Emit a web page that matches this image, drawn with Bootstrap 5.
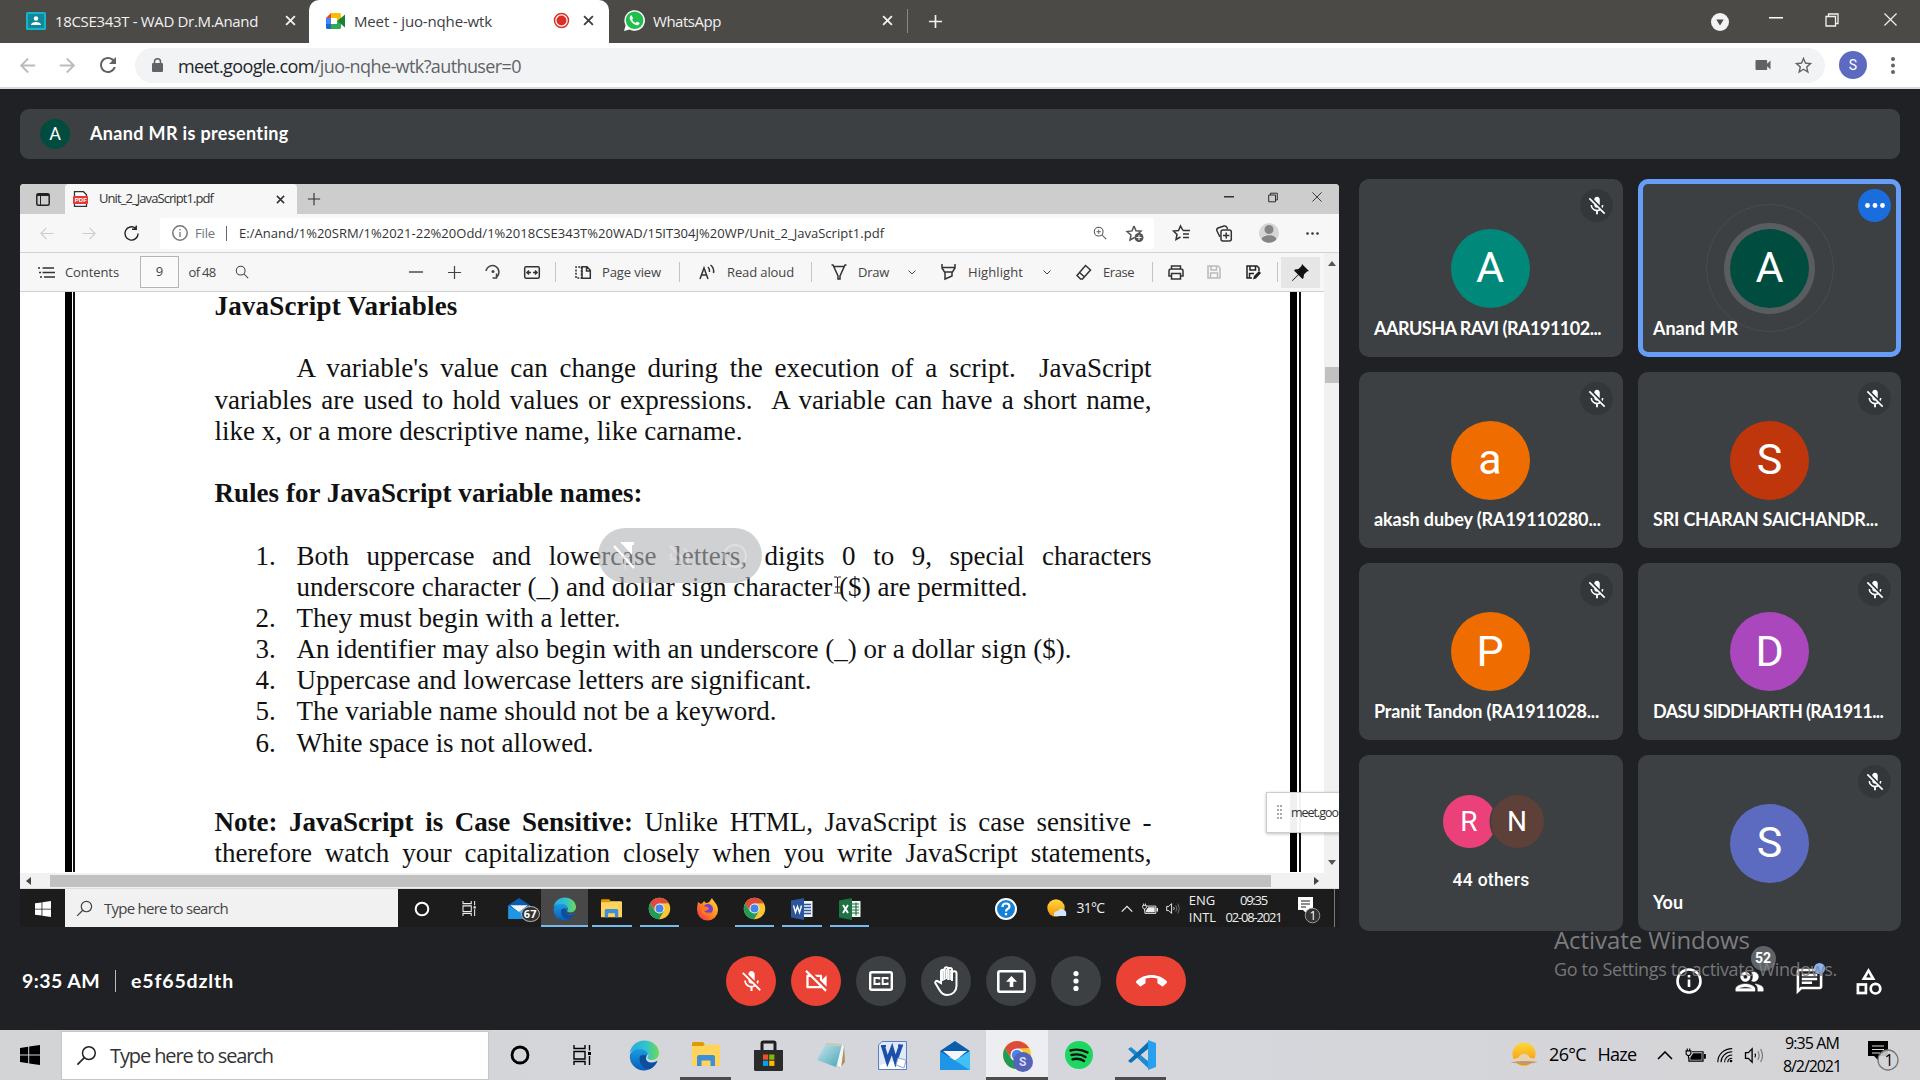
<!DOCTYPE html>
<html lang="en">
<head>
<meta charset="utf-8">
<title>Meet - juo-nqhe-wtk</title>
<link href="https://cdn.jsdelivr.net/npm/bootstrap@5.3.0/dist/css/bootstrap.min.css" rel="stylesheet">
<style>
body{width:1920px;height:1080px;overflow:hidden;background:#202124;font-family:"Open Sans","Noto Sans",sans-serif;font-size:15px;line-height:1.2}
svg{display:block;flex:none;overflow:visible}
.cell{display:flex;align-items:center;justify-content:center;flex:none;white-space:nowrap}
.slots{display:grid;align-items:center;justify-items:center;white-space:nowrap}
.slots>.tx{justify-self:start}
.ln{fill:none;stroke:currentColor;stroke-width:1.5}
.gs{font-family:Lato,"Noto Sans",sans-serif;font-weight:700}
.rb{font-family:Roboto,sans-serif}
.disc{border-radius:50%;display:flex;align-items:center;justify-content:center;color:#fff;flex:none}

/* browser chrome */
.tabstrip{height:43px;background:#4b4a47;color:#f1f1f1}
.tabstrip .slots{padding-bottom:2px}
.tab1{width:309px;grid-template-columns:25px 30px 218px 34px 2px}
.tab2{width:300px;height:43px;background:#fff;color:#3c4043;border-radius:10px 10px 0 0;grid-template-columns:16px 29px 191px 32px 23px 9px}
.tab3{width:299px;grid-template-columns:14px 30px 221px 26px 7px 1px}
.tsep{width:1px;height:24px;background:#8a8987}
.w54{width:54px}.w56{width:56px}.w40{width:40px}
.addrbar{height:46px;background:#fff;border-bottom:2px solid #d9dadc;color:#5f6368;padding-left:7px}
.w405{width:40.5px}
.omni{width:1690px;height:35px;border-radius:18px;background:#f1f3f4;margin-left:6.5px;margin-right:8px;font-size:18px;padding-right:2px}
.lockc{width:43px;padding-left:2px}

/* call page */
.stage{height:941px;padding:20px 0 0 20px}
.banner{width:1880px;height:50px;background:#3c4043;border-radius:9px;color:#fff;font-size:18px}
.d30{width:30px;height:30px}
.split{height:748px;margin-top:20px}
.shared{width:1319px;height:743px;margin-top:5px;background:#fff;border-radius:4px 4px 0 0;overflow:hidden;color:#333;font-size:13px;position:relative}
.etabs{height:30px;background:#cdcdcd}
.etab{width:232px;height:30px;background:#f7f7f7;border-radius:4px 4px 0 0;grid-template-columns:4px 26px 171px 28px 3px}
.w45{width:45px}.w44{width:44px}.w33{width:33px}
.eaddr{height:39px;background:#f7f7f7;border-bottom:1px solid #d2d2d2;grid-template-columns:5px 43px 41px 45px 6px 994px 6px 42px 44px 45px 43px 5px}
.ebox{width:994px;height:31px;background:#fff;border-radius:3px;display:grid;align-items:center;justify-items:center;grid-template-columns:4px 31px 27px 8px 9px 846px 30px 39px}
.ebox .tx{justify-self:start;padding-top:1px}
.etools{width:1304px;height:39px;background:#f7f7f7;border-bottom:1px solid #cfcfcf;color:#444;grid-template-columns:8px 37px 75px 39px 9.5px 33.5px 40px 134px 39px 39px 38px 39px 8px 4px 39px 73px 8px 4px 40px 80px 8px 5px 38px 39px 30px 1px 40px 64px 30px 3px 38px 45px 8px 39px 38px 40px 8px 39px 4px}
.etools .tx{padding-top:1px}
.vsep{width:1px;height:20px;background:#c4c4c4}
.pgbox{width:39px;height:32px;border:1px solid #b5b5b5;background:#fafafa}
.pinb{width:39px;height:31px;background:#e6e6e6;color:#111}
.vscroll{width:15px;height:620px;background:#f1f1f1;color:#555}
.vthumb{width:14px;height:16px;background:#c1c1c1;margin-top:101px}
.page{width:1304px;height:581px;overflow:hidden;color:#111}
.rule2{width:10px;border-left:7px solid #000;border-right:2px solid #111;height:580px}
.rule2.far{width:11px}
.rulegap1{width:45px}
.sheet{width:1215px;font-family:"Liberation Serif",serif;font-size:27px;line-height:31.2px;padding-left:139.5px}
.sheet>div{width:937px;height:31.2px;white-space:nowrap}
.sheet>.topline{height:30.2px;line-height:29.6px}
.full{text-align:justify;text-align-last:justify;white-space:normal!important}
.ind{padding-left:82px}
.sheet>.lst{display:grid;grid-template-columns:18px 0 64px 855px;width:937px}
.lst>span:first-child{grid-column:3;text-align:left;padding-left:23px}
.lst>.body1{grid-column:4}
.noteline{margin-top:48px}
.hscroll{height:16px;background:#f1f1f1;color:#555;border-bottom:1px solid #ddd;grid-template-columns:16px 14px 1221px 35px 20px 13px}
.hthumb{width:1221px;height:12px;background:#c1c1c1}
.itask{height:39px;background:#1c1c1c;color:#eee}
.isearch{width:333px;height:38px;background:#f1f1f1;color:#444;font-size:15px;grid-template-columns:39px 1fr}
.iapps{display:flex;height:39px}
.iapps>.cell{width:47.55px;height:39px;position:relative}
.iapps>.on::after{content:"";position:absolute;left:4px;right:4px;bottom:0;height:3px;background:#76b9ed}
.iapps>.act{background:#484848}
.iapps>.act::after{left:0;right:0}
.itray{grid-template-columns:46px 16px 24px 42px 28px 22px 24px 34px 68px 44px 3px 1px;height:39px;font-size:13px;margin-left:110px}
.tline{width:1px;height:39px;background:#777}
.hud{left:578px;top:344px;width:164px;height:55px;border-radius:28px;background:rgba(176,178,181,.6);display:grid;grid-template-columns:1fr 1fr 1fr;align-items:center;justify-items:center}
.toastbox{left:1246px;top:608px;width:80px;height:41px;background:rgba(255,255,255,.94);border:1px solid #ccc;box-shadow:0 1px 3px rgba(0,0,0,.25);font-size:12.5px;white-space:nowrap;padding:12px 0 0 24px}
.grip{left:10px;top:12px;width:5px;height:14px;border-left:2px dotted #aaa;border-right:2px dotted #aaa}
.ibeam{left:813px;top:392px}

/* participants */
.people{display:grid;grid-template-columns:264px 263px;grid-template-rows:178px 176px 177px 176px;column-gap:15px;row-gap:15px;margin-left:20px;align-content:start}
.tile{background:#3c4043;border-radius:10px;color:#fff;position:relative;display:flex;align-items:center;justify-content:center}
.tile.speaking{box-shadow:inset 0 0 0 5px #669df6}
.face{width:79px;height:79px;font-size:43px;position:relative}
.tile:nth-child(odd)>.face{left:-1px}
.face.ring{box-shadow:0 0 0 6px #5a5d60}
.halo{position:absolute;left:50%;top:50%;width:128px;height:128px;margin:-64px;border:1px solid #484c50;border-radius:50%}
.mic{position:absolute;right:10px;top:10px;width:33px;height:33px;background:#34373a}
.who{position:absolute;left:15px;bottom:20.5px;font-size:18px;line-height:18px;white-space:nowrap}
.f53{width:53px;height:53px;font-size:28px}
.f53+.f53{margin-left:-5px;box-shadow:0 0 0 1.5px #3c4043}

/* call bar */
.callbar{height:103px;padding-top:5px;color:#fff;width:1900px;display:grid;grid-template-columns:706px 470px 1fr;align-items:center}
.clock{font-size:19.5px;padding-left:2px}
.csep{width:1px;height:22px;background:#bbb;margin:0 15px}
.cbtn{width:50px;height:50px;border-radius:25px;background:#3c4043;color:#fff}
.red{background:#ea4335}
.cbtn.hang{width:70px}
.cright{grid-template-columns:60px 60px 60px 60px;justify-content:end;padding-right:21px}
.cnt{left:18px;top:-19px;width:25px;height:25px;background:#5f6368;font-size:14px;font-weight:700}
.dot{left:18px;top:-5px;width:11px;height:11px;background:#8ab4f8;border-radius:50%}
.mark1{left:1554px;top:922px;color:#848587;font-size:24px;line-height:36px;white-space:nowrap;opacity:.92}
.mark2{left:1554px;top:957px;color:#848587;font-size:18px;line-height:24px;white-space:nowrap;opacity:.85}

/* taskbar */
.wtask{height:50px;background:linear-gradient(90deg,#d3d4d6,#d6d7dd 55%,#d4d4d6);color:#000}
.wstart{width:61px;padding-right:1px}
.wsearch{width:428px;height:49px;background:#fff;border:1px solid #c6c6c6;color:#333;font-size:20px;grid-template-columns:48px 1fr;margin-top:1px}
.wapps>.cell{width:62.1px;height:50px;position:relative}
.wapps>.on::after{content:"";position:absolute;left:5px;right:6px;bottom:0;height:3px;background:#4c4c4e}
.wapps>.act{background:#edeef1}
.wapps>.act::after{left:0;right:0}
.wtray{grid-template-columns:44px 43px 56px 35px 30px 30px 28px 88px 56px;height:50px;margin-left:auto;padding-right:8px;font-size:18px}
.wtray .stack{font-size:16px;line-height:23px;text-align:center}
.itray .stack{line-height:16.5px;font-size:13px}
</style>
</head>
<body>
<svg width="0" height="0" class="position-absolute">
<defs>
<linearGradient id="gE1" x1="0" y1="0" x2="1" y2="0"><stop offset="0" stop-color="#29a9e0"/><stop offset=".55" stop-color="#2fc2cf"/><stop offset="1" stop-color="#6fdc50"/></linearGradient>
<linearGradient id="gE2" x1="0" y1="0" x2="0" y2="1"><stop offset="0" stop-color="#1b9de2"/><stop offset="1" stop-color="#0a5cb8"/></linearGradient>
<linearGradient id="gS" x1="0" y1="0" x2="0" y2="1"><stop offset="0" stop-color="#ffd93b"/><stop offset="1" stop-color="#f79009"/></linearGradient>
<linearGradient id="gF" x1="1" y1="0" x2="0" y2="1"><stop offset="0" stop-color="#ffe23a"/><stop offset=".5" stop-color="#ff8a1c"/><stop offset="1" stop-color="#f0235a"/></linearGradient>
<linearGradient id="gN" x1="0" y1="0" x2="1" y2="1"><stop offset="0" stop-color="#c8eaf0"/><stop offset="1" stop-color="#4aa3b5"/></linearGradient>
<symbol id="x" viewBox="0 0 10 10"><path d="M1 1l8 8M9 1l-8 8" fill="none" stroke="currentColor" stroke-width="1.7"/></symbol>
<symbol id="xt" viewBox="0 0 14 14"><path d="M.5.5l13 13M13.500.500l-13 13" fill="none" stroke="currentColor" stroke-width="1.300"/></symbol>
<symbol id="restore" viewBox="0 0 14 14"><path d="M1 3.500h9.500v9.500H1zM3.500 3.500V1H13v9.500h-2.500" fill="none" stroke="currentColor" stroke-width="1.300"/></symbol>
<symbol id="plus" viewBox="0 0 16 16"><path d="M8 1v14M1 8h14" fill="none" stroke="currentColor" stroke-width="1.800"/></symbol>
<symbol id="plust" viewBox="0 0 16 16"><path d="M8 1v14M1 8h14" fill="none" stroke="currentColor" stroke-width="1.300"/></symbol>
<symbol id="back" viewBox="0 0 24 24"><path d="M20 11H7.830l5.590-5.590L12 4l-8 8 8 8 1.410-1.410L7.830 13H20z" fill="currentColor"/></symbol>
<symbol id="backt" viewBox="0 0 16 16"><path d="M15 8H1.500M7.500 2l-6 6 6 6" fill="none" stroke="currentColor" stroke-width="1.200"/></symbol>
<symbol id="reload" viewBox="0 0 24 24"><path d="M17.650 6.350C16.200 4.900 14.210 4 12 4c-4.420 0-7.990 3.580-7.990 8s3.570 8 7.990 8c3.730 0 6.840-2.550 7.730-6h-2.080c-.82 2.330-3.040 4-5.650 4-3.310 0-6-2.690-6-6s2.690-6 6-6c1.660 0 3.140.69 4.220 1.780L13 11h7V4z" fill="currentColor"/></symbol>
<symbol id="reloadt" viewBox="0 0 18 18"><path d="M16 9a7 7 0 1 1-2.500-5.400M14 .5v4h-4.500" fill="none" stroke="currentColor" stroke-width="1.500"/></symbol>
<symbol id="micoff" viewBox="0 0 24 24"><path fill="currentColor" d="M19 11h-1.700c0 .74-.16 1.430-.43 2.050l1.230 1.230c.56-.98.9-2.090.9-3.280zm-4.020.17c0-.06.02-.11.02-.17V5c0-1.660-1.340-3-3-3S9 3.340 9 5v.18l5.980 5.990zM4.270 3L3 4.270l6.010 6.010V11c0 1.660 1.330 3 2.990 3 .22 0 .44-.03.65-.08l1.660 1.660c-.71.33-1.500.52-2.310.52-2.760 0-5.300-2.100-5.300-5.100H5c0 3.410 2.720 6.230 6 6.720V21h2v-3.280c.91-.13 1.770-.45 2.540-.9L19.730 21 21 19.730 4.270 3z"/></symbol>
<symbol id="camoff" viewBox="0 0 24 24"><path fill="currentColor" d="M9.560 8l-2-2-4.150-4.140L2 3.270 4.730 6H4c-.55 0-1 .45-1 1v10c0 .55.45 1 1 1h12c.21 0 .39-.08.55-.18L19.730 21l1.410-1.410-8.860-8.860L9.560 8zM5 16V8h1.730l8 8H5zm10-8v2.610l6 6V6.500l-4 4V7c0-.55-.45-1-1-1h-5.610l2 2H15z"/></symbol>
<symbol id="mag" viewBox="0 0 22 22"><circle cx="13.500" cy="8.500" r="6.700" fill="none" stroke="currentColor" stroke-width="1.600"/><path d="M8.700 13.300L1.500 20.500" stroke="currentColor" stroke-width="1.700"/></symbol>
<symbol id="magr" viewBox="0 0 16 16"><circle cx="6.500" cy="6.500" r="5" fill="none" stroke="currentColor" stroke-width="1.200"/><path d="M10 10l5 5" stroke="currentColor" stroke-width="1.200"/></symbol>
<symbol id="win" viewBox="0 0 20 20"><path fill="currentColor" d="M0 2.900l8.200-1.100v7.800H0zM9.200 1.600L20 0v9.600H9.200zM0 10.500h8.200v7.700L0 17.100zM9.200 10.500H20V20L9.200 18.400z"/></symbol>
<symbol id="tview" viewBox="0 0 18 20"><path d="M1 0v3.500h11V0M1 20v-3.500h11V20M1 6.500h11v7.500H1zM16.500 0v5.500M16.500 11v9" fill="none" stroke="currentColor" stroke-width="1.400"/><path d="M15 7h3v3h-3z" fill="currentColor"/></symbol>
<symbol id="edge" viewBox="0 0 30 30"><path fill="url(#gE2)" d="M1 14C3 9 10 6 15 9c4 2 5 4 3 6-2 3-1 7 4 7 3 0 5-1 6.500-2C26 26 21 30 15 30 7 30-.5 23 1 14z"/><path fill="#0d4f9e" d="M10.500 17c-.5 7 4 12 10.500 11.500 3-1.200 6-4 7.500-8-3 2-6.500 2.500-9 1.200-3-1.500-3.400-4.700-1.700-6.700C15 14 11 14 10.500 17z"/><path fill="url(#gE1)" d="M.5 13C2 5 8 0 15 0c9 0 15 6 15 12.500 0 4-3 7-7 7-3 0-5-1-4.500-2.500C21 14 18 8.500 11 8.500 6 8.500 2 10.500.5 13z"/></symbol>
<symbol id="folder" viewBox="0 0 28 26"><path fill="#e09a00" d="M0 1.500Q0 0 1.500 0H11l2 3v4H0z"/><path fill="#ffd35c" d="M0 4h11l2-1.500h13.500Q28 2.500 28 4v20H0z"/><path fill="#3c8fd8" d="M5 24v-9q0-2 2-2h14q2 0 2 2v9h-4.500v-5.500h-9V24z"/></symbol>
<symbol id="chrome" viewBox="0 0 30 30"><circle cx="15" cy="15" r="14" fill="#fbc634"/><path fill="#dc4b3e" d="M2.900 8A14 14 0 0 1 27.100 8L15 8.500 9 18z"/><path fill="#1f9d58" d="M2.900 8A14 14 0 0 0 14.500 29l6.500-11-6 3.500-6-3z"/><circle cx="15" cy="15" r="6.600" fill="#f4f4f4"/><circle cx="15" cy="15" r="5.200" fill="#4685ee"/></symbol>
<symbol id="mail" viewBox="0 0 30 29"><path fill="#0a5cad" d="M0 10L15 0l15 10-4 6H4z"/><path fill="#f3f5f8" d="M3 10h24L15 20z"/><path fill="#1f95e5" d="M0 10l15 9.500L30 10v19H0z"/><path fill="#41c1f5" d="M30 10L15 19.500 29.500 29h.5z"/></symbol>
<symbol id="wifi" viewBox="0 0 20 20"><g fill="none" stroke="currentColor" stroke-width="1.400"><path d="M1 19C1 9 9 2 19 2M5 19c0-7 6-13 14-13M9.500 19c0-5 4-9 9.500-9M13.500 19c0-3 2-5 5.500-5"/></g><circle cx="17.500" cy="17.500" r="1.700" fill="currentColor"/></symbol>
<symbol id="spk" viewBox="0 0 20 18"><path d="M1 6v6h3l4 4V2L4 6z" fill="none" stroke="currentColor" stroke-width="1.400"/><path d="M11 7q1.300 2 0 4" fill="none" stroke="currentColor" stroke-width="1.300"/><path d="M14 4.500q3 4.500 0 9M17 2q4 7 0 14" fill="none" stroke="currentColor" stroke-width="1.100" opacity=".5"/></symbol>
<symbol id="bat" viewBox="0 0 22 16"><path d="M7 4h12v10H4v-4" fill="none" stroke="currentColor" stroke-width="1.300"/><path d="M8.500 5.500h9v7h-12V10zM20 6.500h2v5h-2z" fill="currentColor"/><path d="M1 3h5v3.500L4.500 8h-2L1 6.500zM2.200.5V3M4.800.5V3M3.500 8v3" stroke="currentColor" fill="none" stroke-width="1.200"/></symbol>
<symbol id="up" viewBox="0 0 16 9"><path d="M1 8l7-7 7 7" fill="none" stroke="currentColor" stroke-width="1.600"/></symbol>
<symbol id="chev" viewBox="0 0 8 5"><path d="M.5.500l3.500 3.500L7.500.500" fill="none" stroke="currentColor" stroke-width="1"/></symbol>
<symbol id="note" viewBox="0 0 20 20"><path fill="currentColor" d="M0 0h20v15h-9v5l-5-5H0z"/></symbol>
</defs>
</svg>

<header class="tabstrip d-flex align-items-center">
  <div class="slots tab1"><i></i>
    <svg class="me-2" width="20" height="18" viewBox="0 0 20 18"><rect width="20" height="18" rx="1.500" fill="#12b5cb"/><rect x="2" y="2" width="16" height="14" fill="#128798"/><circle cx="10" cy="6.500" r="2.200" fill="#fff"/><path d="M5 13c0-4 10-4 10 0z" fill="#fff"/></svg>
    <span class="tx" data-w="203">18CSE343T - WAD Dr.M.Anand</span>
    <svg width="11" height="11"><use href="#x"/></svg><i></i></div>
  <div class="slots tab2"><i></i>
    <svg class="me-2" width="19" height="16" viewBox="0 0 19 16"><path fill="#ea4335" d="M0 5l5-5v5z"/><path fill="#fbbc04" d="M5 0h8.500Q15 0 15 1.500V6l-4 2V5H5z"/><path fill="#4285f4" d="M0 5h5v6H0z"/><path fill="#1967d2" d="M0 11h5v5H1.500Q0 16 0 14.500z"/><path fill="#34a853" d="M5 11h6V8l4-3v9.500q0 1.500-1.500 1.500H5z"/><path fill="#188038" d="M11.500 8L19 1.500v13z"/></svg>
    <span class="tx" data-w="138">Meet - juo-nqhe-wtk</span>
    <svg width="17" height="17" viewBox="0 0 17 17"><circle cx="8.500" cy="8.500" r="7" fill="none" stroke="#d93025" stroke-width="1.500"/><circle cx="8.500" cy="8.500" r="5" fill="#d93025"/></svg>
    <svg width="11" height="11"><use href="#x"/></svg><i></i></div>
  <div class="slots tab3"><i></i>
    <svg class="me-2" width="21" height="21" viewBox="0 0 21 21"><path fill="#fff" d="M0 21l1.600-5.600A10.300 10.300 0 1 1 5.700 19.500z"/><circle cx="10.600" cy="10.300" r="8.800" fill="#1fbf4e"/><path fill="#fff" d="M7.500 5.300c-.8.1-2 1.200-1.800 2.700.4 3 3.600 6.600 7 7.200 1.500.2 2.900-.8 2.900-2.200l-2.600-1.400-1.200 1.300c-1.600-.5-3-2-3.700-3.500l1-1.200z"/></svg>
    <span class="tx" data-w="68">WhatsApp</span>
    <svg width="11" height="11"><use href="#x"/></svg><i></i><b class="tsep"></b></div>
  <div class="cell w54"><svg width="15" height="15"><use href="#plus"/></svg></div>
  <div class="d-flex ms-auto pe-1">
    <div class="cell w56"><svg width="18" height="18" viewBox="0 0 18 18"><circle cx="9" cy="9" r="9" fill="#f1f3f4"/><path d="M5.300 6.500h7.400L9 12.500z" fill="#4b4a47"/></svg></div>
    <div class="cell w56 pb-2"><svg width="14" height="2"><rect width="14" height="1.500" fill="#fff"/></svg></div>
    <div class="cell w56 pb-1"><svg width="14" height="14"><use href="#restore"/></svg></div>
    <div class="cell w56 pb-1 ps-1"><svg width="13" height="13"><use href="#xt"/></svg></div>
  </div>
</header>

<nav class="addrbar d-flex align-items-center">
  <div class="cell w405"><svg width="23" height="23" color="#babcbe"><use href="#back"/></svg></div>
  <div class="cell w405"><svg width="23" height="23" color="#babcbe"><g transform="translate(23 0) scale(-1 1)"><use href="#back" width="23" height="23"/></g></svg></div>
  <div class="cell w405"><svg width="24" height="24"><use href="#reload"/></svg></div>
  <div class="omni d-flex align-items-center">
    <div class="cell lockc"><svg width="11" height="14" viewBox="0 0 11 14"><rect y="5" width="11" height="9" rx="1" fill="#5f6368"/><path d="M2.500 6V3.700a3 3 0 0 1 6 0V6" class="ln"/></svg></div>
    <span class="text-nowrap pt-1" data-w="343"><span class="text-dark">meet.google.com</span>/juo-nqhe-wtk?authuser=0</span>
    <div class="cell w40 ms-auto"><svg width="20" height="20" viewBox="0 0 24 24"><path fill="#5f6368" d="M17 10.500V7c0-.55-.45-1-1-1H4c-.55 0-1 .45-1 1v10c0 .55.45 1 1 1h12c.55 0 1-.45 1-1v-3.500l4 4v-11z"/></svg></div>
    <div class="cell w40"><svg width="21" height="21" viewBox="0 0 24 24"><path fill="#5f6368" d="M22 9.240l-7.190-.62L12 2 9.190 8.630 2 9.240l5.460 4.730L5.820 21 12 17.270 18.180 21l-1.630-7.030L22 9.240zM12 15.400l-3.760 2.270 1-4.280-3.320-2.880 4.380-.38L12 6.100l1.710 4.040 4.380.38-3.320 2.880 1 4.280L12 15.400z"/></svg></div>
  </div>
  <div class="cell w40"><div class="disc rb" style="width:28px;height:28px;background:#5c6bc0;font-size:14px">S</div></div>
  <div class="cell w40"><svg width="4" height="17" viewBox="0 0 4 17" fill="#5f6368"><circle cx="2" cy="2" r="2"/><circle cx="2" cy="8.500" r="2"/><circle cx="2" cy="15" r="2"/></svg></div>
</nav>

<main class="stage">
  <div class="banner d-flex align-items-center">
    <div class="disc d30 rb" style="margin:0 20px;background:#004d40">A</div>
    <span class="gs" data-w="199">Anand MR is presenting</span>
  </div>

  <div class="split d-flex">
    <section class="shared">
      <div class="etabs d-flex">
        <div class="cell w45"><svg width="14" height="13" viewBox="0 0 14 13"><rect x=".8" y=".8" width="12.400" height="11.400" rx="1.500" fill="none" stroke="#222" stroke-width="1.500"/><path d="M1 2h12" stroke="#222" stroke-width="2"/><path d="M4.500 3v9" stroke="#222"/></svg></div>
        <div class="slots etab"><i></i>
          <svg class="me-1" width="15" height="16" viewBox="0 0 15 16"><path d="M1.500.700h9l3 3v11.600h-12z" fill="#fff" stroke="#333" stroke-width="1.300"/><rect y="5" width="15" height="8" rx="1" fill="#e23b35"/><text x="1.800" y="11.300" font-size="6" font-weight="700" fill="#fff" font-family="Liberation Sans">PDF</text></svg>
          <span class="tx ps-1" data-w="114">Unit_2_JavaScript1.pdf</span>
          <svg width="9" height="9"><use href="#x"/></svg><i></i></div>
        <div class="cell w33"><svg width="14" height="14"><use href="#plust"/></svg></div>
        <div class="d-flex ms-auto">
          <div class="cell w44 pb-1"><svg width="10" height="2"><rect width="10" height="1.500" fill="#333"/></svg></div>
          <div class="cell w44 pb-1"><svg width="10" height="11" color="#222"><use href="#restore"/></svg></div>
          <div class="cell w44 pb-1"><svg width="10" height="10" color="#333"><use href="#xt"/></svg></div>
        </div>
      </div>
      <div class="slots eaddr"><i></i>
        <svg width="16" height="15" color="#ccc"><use href="#backt"/></svg>
        <svg width="16" height="15" color="#ccc"><g transform="translate(16 0) scale(-1 1)"><use href="#backt" width="16" height="15"/></g></svg>
        <svg width="17" height="17" color="#222"><use href="#reloadt"/></svg><i></i>
        <div class="ebox"><i></i>
          <svg width="16" height="16" viewBox="0 0 16 16" color="#777"><circle cx="8" cy="8" r="7.200" class="ln" stroke-width="1.100"/><path d="M8 7v5M8 4v1.500" stroke="currentColor" stroke-width="1.300"/></svg>
          <span class="tx text-secondary" data-w="20">File</span>
          <b class="vsep" style="height:15px;background:#666"></b><i></i>
          <span class="tx" data-w="645">E:/Anand/1%20SRM/1%2021-22%20Odd/1%2018CSE343T%20WAD/15IT304J%20WP/Unit_2_JavaScript1.pdf</span>
          <svg width="14" height="14" color="#555" viewBox="0 0 16 16"><use href="#magr" width="16" height="16"/><path d="M4 6.500h5M6.500 4v5" stroke="#555"/></svg>
          <svg width="18" height="17" viewBox="0 0 18 17" color="#555"><path d="M8 1l2 4.800 5 .4-3.700 3.300M8.500 12.500L4 15l1-5L1 6.500l5-.6L8 1" class="ln" stroke-width="1.100"/><circle cx="13" cy="12.500" r="4.500" fill="#555"/><path d="M10.500 12.500h5M13 10v5" stroke="#fff"/></svg>
        </div><i></i>
        <svg width="17" height="16" viewBox="0 0 17 16" color="#333"><path d="M10 5.500L7.500 1 5.500 5.500l-5 .6L4 9.500 3 14.500l4.500-2.500M10 5.500h7M10 9h6M10 12.500h6" class="ln" stroke-width="1.200"/></svg>
        <svg width="16" height="17" viewBox="0 0 16 17" color="#333"><rect x="5" y="5" width="10.300" height="11" rx="2" class="ln" stroke-width="1.200"/><path d="M10.200 7.500v6M7 10.500h6.400M4 12L1 6q-.8-2 1-3l6-2q2-.5 3 1.500L11.500 4" class="ln" stroke-width="1.200"/></svg>
        <svg width="20" height="22" viewBox="0 0 20 22"><circle cx="10" cy="11" r="10" fill="#d6d6d6"/><circle cx="10" cy="7.500" r="4.500" fill="#858585"/><path d="M2.500 17c2-5 13-5 15 0-3 5-12 5-15 0z" fill="#858585"/></svg>
        <svg width="13" height="3" viewBox="0 0 13 3" fill="#333"><circle cx="1.500" cy="1.500" r="1.300"/><circle cx="6.500" cy="1.500" r="1.300"/><circle cx="11.500" cy="1.500" r="1.300"/></svg><i></i>
      </div>
      <div class="d-flex">
        <div>
          <div class="slots etools"><i></i>
            <svg width="17" height="11" viewBox="0 0 17 11"><path d="M4.500 1H16M4.500 5.500H17M6 10h11M0 1h2M1 5.500h2M2 10h2" stroke="#333" stroke-width="1.300"/></svg>
            <span class="tx" data-w="54">Contents</span>
            <span class="pgbox cell">9</span><i></i>
            <span class="tx" data-w="27">of 48</span>
            <svg width="14" height="14"><use href="#magr"/></svg><i></i>
            <svg width="14" height="2"><path d="M0 1h14" stroke="#333" stroke-width="1.300"/></svg>
            <svg width="15" height="15"><use href="#plust"/></svg>
            <svg width="16" height="16" viewBox="0 0 16 16" color="#444"><path d="M1 7A6.500 6.500 0 1 1 11 13.500M11.500 9.500v4.500H7.500" class="ln" stroke-width="1.200"/><circle cx="8" cy="7.500" r="1.500" fill="#444"/></svg>
            <svg width="16" height="13" viewBox="0 0 16 13" color="#333"><rect x=".7" y=".7" width="14.600" height="11.600" rx="1.500" class="ln"/><path d="M3 6.500h4M9 6.500h4M5 4.500l-2 2 2 2M11 4.500l2 2-2 2" class="ln" stroke-width="1"/></svg>
            <b class="vsep"></b><i></i>
            <svg width="16" height="13" viewBox="0 0 16 13" color="#333"><path d="M6.500 1v11H1V1z" class="ln" stroke-width="1.200" stroke-dasharray="2 1.300"/><path d="M7 .700h5l3.300 3.500v8H7zM11.500 1v4H15" class="ln" stroke-width="1.200"/></svg>
            <span class="tx" data-w="59">Page view</span>
            <b class="vsep"></b><i></i>
            <svg width="16" height="15" viewBox="0 0 16 15" color="#333"><path d="M1 14L5 3l4 11M2.500 10h5M9 2q2 2 1.500 5M11.500 0q4 3 3 8" class="ln" stroke-width="1.200"/></svg>
            <span class="tx" data-w="67">Read aloud</span>
            <b class="vsep"></b><i></i>
            <svg width="16" height="16" viewBox="0 0 16 16" color="#333"><path d="M.5 1h1.500l5 11v3h2v-3L14 1h1.500M2.500 2.500h11" class="ln" stroke-width="1.200"/></svg>
            <span class="tx" data-w="31">Draw</span>
            <svg width="8" height="5"><use href="#chev"/></svg><i></i>
            <svg width="15" height="16" viewBox="0 0 15 16" color="#333"><path d="M1 0v4l2.500 4h8L14 4V0M1 3.500h13M4 8v7l7-3V8" class="ln" stroke-width="1.200"/></svg>
            <span class="tx" data-w="55">Highlight</span>
            <svg width="8" height="5"><use href="#chev"/></svg><i></i>
            <svg width="16" height="16" viewBox="0 0 16 16" color="#333"><path d="M9.500 1.500l5 4.500-8 9H4.500L1 11.500zM3.500 8.500l5 4.500" class="ln" stroke-width="1.200"/></svg>
            <span class="tx" data-w="31">Erase</span>
            <b class="vsep"></b>
            <svg width="16" height="15" viewBox="0 0 16 15" color="#333"><path d="M3.500 4V1h9v3M3.500 11H1V6q0-2 2-2h10q2 0 2 2v5h-2.500M3.500 8.500h9V14h-9z" class="ln" stroke-width="1.200"/></svg>
            <svg width="14" height="14" viewBox="0 0 14 14" color="#bbb"><path d="M1 1h10l2 2v10H1zM4 1v4h5.500V1M3.500 13V8h7v5" class="ln" stroke-width="1.100"/></svg>
            <svg width="15" height="15" viewBox="0 0 15 15" color="#222"><path d="M6 13H1V1h10l2 2v3M4 1v4h5.500V1M3.500 13V8.500H8" class="ln" stroke-width="1.200"/><path d="M7 14.500l1-3.500 5-5 2 2-5 5.500z" fill="#222"/></svg>
            <b class="vsep"></b>
            <span class="pinb cell"><svg width="17" height="17" viewBox="0 0 17 17"><path d="M10 0l7 7-2 .5-3 3-.5 3.500-1 1L6.500 11 .5 17 0 16.500l6-6L2 6.500l1-1L6.500 5l3-3z" fill="#111"/></svg></span><i></i>
          </div>
          <div class="page d-flex">
            <div class="rulegap1"></div><div class="rule2"></div>
            <div class="sheet">
              <div class="fw-bold topline"><span data-w="243">JavaScript Variables</span></div>
              <div></div>
              <div class="full ind">A variable's value can change during the execution of a script. &nbsp;JavaScript</div>
              <div class="full">variables are used to hold values or expressions. &nbsp;A variable can have a short name,</div>
              <div><span data-w="528">like x, or a more descriptive name, like carname.</span></div>
              <div></div>
              <div class="fw-bold"><span data-w="428">Rules for JavaScript variable names:</span></div>
              <div></div>
              <div class="lst"><span>1.</span><span class="body1 full">Both uppercase and lowercase letters, digits 0 to 9, special characters</span></div>
              <div class="lst"><span></span><span class="body1"><span data-w="731">underscore character (_) and dollar sign character ($) are permitted.</span></span></div>
              <div class="lst"><span>2.</span><span class="body1"><span data-w="324">They must begin with a letter.</span></span></div>
              <div class="lst"><span>3.</span><span class="body1"><span data-w="775">An identifier may also begin with an underscore (_) or a dollar sign ($).</span></span></div>
              <div class="lst"><span>4.</span><span class="body1"><span data-w="515">Uppercase and lowercase letters are significant.</span></span></div>
              <div class="lst"><span>5.</span><span class="body1"><span data-w="480">The variable name should not be a keyword.</span></span></div>
              <div class="lst"><span>6.</span><span class="body1"><span data-w="297">White space is not allowed.</span></span></div>
              <div class="full noteline"><b>Note: JavaScript is Case Sensitive:</b> Unlike HTML, JavaScript is case sensitive -</div>
              <div class="full">therefore watch your capitalization closely when you write JavaScript statements,</div>
            </div>
            <div class="rule2 far"></div>
          </div>
        </div>
        <div class="vscroll d-flex flex-column align-items-center">
          <svg class="mt-2" width="8" height="5"><path d="M0 5L4 0l4 5z" fill="#555"/></svg>
          <div class="vthumb"></div>
          <svg class="mt-auto mb-2" width="8" height="5"><path d="M0 0h8L4 5z" fill="#555"/></svg>
        </div>
      </div>
      <div class="slots hscroll"><svg width="5" height="8"><path d="M5 0v8L0 4z" fill="#444"/></svg><i></i><b class="hthumb"></b><i></i><svg width="5" height="8"><path d="M0 0v8l5-4z" fill="#444"/></svg><i></i></div>
      <div class="itask d-flex">
        <div class="cell w45"><svg width="16" height="16" color="#fff"><use href="#win"/></svg></div>
        <div class="slots isearch"><svg width="17" height="17"><use href="#mag"/></svg><span class="tx" data-w="124">Type here to search</span></div>
        <div class="iapps">
          <div class="cell"><svg width="16" height="16"><circle cx="8" cy="8" r="6.300" fill="none" stroke="#fff" stroke-width="2"/></svg></div>
          <div class="cell"><svg width="16" height="15"><use href="#tview"/></svg></div>
          <div class="cell"><svg class="ms-1" width="24" height="21"><use href="#mail"/></svg><span class="disc position-absolute fw-bold" style="width:19px;height:16px;right:1px;top:17px;background:#333;border:1px solid #aaa;font-size:11px">67</span></div>
          <div class="cell act on"><svg width="23" height="24"><use href="#edge"/></svg></div>
          <div class="cell on"><svg width="21" height="20"><use href="#folder"/></svg></div>
          <div class="cell on"><svg width="23" height="23"><use href="#chrome"/></svg></div>
          <div class="cell"><svg width="23" height="22" viewBox="0 0 23 22"><path fill="url(#gF)" d="M2 4l3 2q2-1 3-3l2 2c3 0 4-2 6-5 1 3 6 6 6 12a10.500 10.500 0 0 1-21 0c0-3 .5-5 1-8z"/><circle cx="12" cy="11" r="5" fill="#7b3fd0"/><path d="M5 9q4-2 8 1-1 3-5 3 2 3 7 1-4 6-9 1z" fill="#ff7a1c"/></svg></div>
          <div class="cell on"><svg width="23" height="23"><use href="#chrome"/></svg></div>
          <div class="cell on"><svg width="22" height="22" viewBox="0 0 22 22"><rect x="10" y="3" width="11.500" height="16" fill="#f1f4fa"/><path d="M13 6.500h7M13 9.500h7M13 12.500h7M13 15.500h7" stroke="#2b579a" stroke-width="1.300"/><path d="M0 2.500L13 0v22L0 19.500z" fill="#2b579a"/><path d="M2.500 7.500l2 7 2-6 2 6 2-7" fill="none" stroke="#fff" stroke-width="1.400"/></svg></div>
          <div class="cell on"><svg width="22" height="22" viewBox="0 0 22 22"><rect x="10" y="3" width="11.500" height="16" fill="#f1f7f3"/><path d="M13 6h7M13 9h7M13 12h7M13 15h7M17 4.500v13" stroke="#1e7145" stroke-width="1.200"/><path d="M0 2.500L13 0v22L0 19.500z" fill="#1e7145"/><path d="M4 7l5 8M9 7l-5 8" fill="none" stroke="#fff" stroke-width="1.900"/></svg></div>
        </div>
        <div class="slots itray">
          <svg width="22" height="22"><circle cx="11" cy="11" r="10" fill="#1580d6" stroke="#fff" stroke-width="2"/><path d="M7.500 9q0-3.500 3.500-3.500T14.500 8.500q0 1.500-2 2.500-1.500.8-1.500 2.500M11 15v2.300" fill="none" stroke="#fff" stroke-width="2.200"/></svg><i></i>
          <svg width="20" height="20"><circle cx="9" cy="9" r="8.700" fill="url(#gS)"/><path d="M7 17q-1-5 4-5 2-4 6-1 3 1 2 6z" fill="#cfe6f8"/></svg>
          <span data-w="28" style="font-size:14px">31°C</span>
          <svg width="12" height="8" class="ms-1"><use href="#up"/></svg>
          <svg width="16" height="12"><use href="#bat"/></svg>
          <svg width="14" height="13"><use href="#spk"/></svg>
          <span class="stack">ENG<br>INTL</span>
          <span class="stack text-center"><span data-w="27">09:35</span><br><span data-w="56">02-08-2021</span></span>
          <svg width="22" height="30" viewBox="0 0 22 30" color="#fff"><path d="M0 3h15v13H9v4l-4-4H0z" fill="#fff"/><path d="M3 7h9M3 10h9M3 13h5" stroke="#1c1c1c"/><circle cx="14.500" cy="21.500" r="7.300" fill="#333" stroke="#999"/><text x="11.500" y="26" font-size="12" fill="#fff">1</text></svg><i></i>
          <b class="tline"></b>
        </div>
      </div>
      <div class="hud position-absolute">
        <svg width="24" height="30" viewBox="0 0 24 30"><path d="M7 1h14v3h-2v10l-9-10z" fill="#fff"/><path d="M1 5l20 22" stroke="#fff" stroke-width="2.500"/><path d="M6 16h10M12 19v9" stroke="#dcdddf" stroke-width="1.500"/></svg>
        <svg width="24" height="24" viewBox="0 0 24 24" opacity=".25"><path d="M2 2l20 20M3 9v6h4l5 5M16 4q7 8 2 15" stroke="#fff" fill="none" stroke-width="2.500"/></svg>
        <svg width="26" height="26"><circle cx="13" cy="13" r="11" fill="none" stroke="#fff" stroke-width="2" opacity=".3"/></svg>
      </div>
      <svg class="ibeam position-absolute" width="9" height="18"><path d="M1 1h3l.5.700.5-.7h3M4.500 1.500v15M1 17h7M2 11h5" fill="none" stroke="#222"/></svg>
      <div class="toastbox position-absolute"><i class="grip position-absolute"></i><span data-w="47">meet.goo</span></div>
    </section>

    <section class="people">
      <div class="tile"><div class="disc face rb" style="background:#00897b">A</div><div class="disc mic"><svg width="22" height="22"><use href="#micoff"/></svg></div><div class="who gs"><span data-w="227">AARUSHA RAVI (RA191102...</span></div></div>
      <div class="tile speaking"><i class="halo"></i><div class="disc face ring rb" style="background:#004d40">A</div><div class="disc mic" style="background:#1a6ddd"><svg width="20" height="5" viewBox="0 0 20 5" fill="#fff"><circle cx="2.500" cy="2.500" r="2.400"/><circle cx="10" cy="2.500" r="2.400"/><circle cx="17.500" cy="2.500" r="2.400"/></svg></div><div class="who gs"><span data-w="85">Anand MR</span></div></div>
      <div class="tile"><div class="disc face rb" style="background:#ef6c00">a</div><div class="disc mic"><svg width="22" height="22"><use href="#micoff"/></svg></div><div class="who gs"><span data-w="227">akash dubey (RA19110280...</span></div></div>
      <div class="tile"><div class="disc face rb" style="background:#bf360c">S</div><div class="disc mic"><svg width="22" height="22"><use href="#micoff"/></svg></div><div class="who gs"><span data-w="225">SRI CHARAN SAICHANDR...</span></div></div>
      <div class="tile"><div class="disc face rb" style="background:#ef6c00">P</div><div class="disc mic"><svg width="22" height="22"><use href="#micoff"/></svg></div><div class="who gs"><span data-w="225">Pranit Tandon (RA1911028...</span></div></div>
      <div class="tile"><div class="disc face rb" style="background:#ab47bc">D</div><div class="disc mic"><svg width="22" height="22"><use href="#micoff"/></svg></div><div class="who gs"><span data-w="230">DASU SIDDHARTH (RA1911...</span></div></div>
      <div class="tile flex-column"><div class="d-flex ps-1"><div class="disc f53 rb" style="background:#ec407a">R</div><div class="disc f53 rb" style="background:#5d4037">N</div></div><div class="rb fw-medium" style="font-size:17.5px;margin-top:22px"><span data-w="77">44 others</span></div></div>
      <div class="tile"><div class="disc face rb" style="background:#5c6bc0">S</div><div class="disc mic"><svg width="22" height="22"><use href="#micoff"/></svg></div><div class="who gs"><span data-w="30">You</span></div></div>
    </section>
  </div>

  <footer class="callbar">
    <div class="d-flex align-items-center gs clock"><span data-w="78">9:35 AM</span><i class="csep"></i><span data-w="103">e5f65dzlth</span></div>
    <div class="d-flex" style="gap:15px">
      <button class="btn p-0 border-0 cell cbtn red"><svg width="25" height="25"><use href="#micoff"/></svg></button>
      <button class="btn p-0 border-0 cell cbtn red"><svg width="27" height="27"><use href="#camoff"/></svg></button>
      <button class="btn p-0 border-0 cell cbtn"><svg width="24" height="20" viewBox="0 0 24 20"><rect x="1.200" y="1.200" width="21.600" height="17.600" rx="1.500" fill="none" stroke="#fff" stroke-width="2.400"/><path d="M10.300 8.500V7H5.500v6h4.800v-1.500M18.500 8.500V7h-4.800v6h4.800v-1.500" fill="none" stroke="#fff" stroke-width="2"/></svg></button>
      <button class="btn p-0 border-0 cell cbtn"><svg width="24" height="30" viewBox="0 0 24 30"><path d="M22.500 9v11a9 9 0 0 1-9 9c-4 0-6-1.500-8-5L1.300 17c-.5-1 .8-2.500 2-2L7 17V6M7 16V5.500a1.700 1.700 0 0 1 3.500 0V14V3a1.700 1.700 0 0 1 3.700 0v11V4a1.700 1.700 0 0 1 3.800 0v11V7.500a2.200 2.200 0 0 1 4.500 0V12" fill="none" stroke="#fff" stroke-width="2"/><path d="M8.800 5v10M12.400 3v10M16.100 4v10" stroke="#fff" stroke-width="1.500"/></svg></button>
      <button class="btn p-0 border-0 cell cbtn"><svg width="29" height="23" viewBox="0 0 29 23"><rect x="1.300" y="1.300" width="26.400" height="20.400" rx="1.800" fill="none" stroke="#fff" stroke-width="2.600"/><path d="M14.500 6l5.500 5.700h-3.700V17h-3.600v-5.300H9z" fill="#fff"/></svg></button>
      <button class="btn p-0 border-0 cell cbtn"><svg width="6" height="20" viewBox="0 0 6 20" fill="#fff"><circle cx="3" cy="2.600" r="2.600"/><circle cx="3" cy="10" r="2.600"/><circle cx="3" cy="17.400" r="2.600"/></svg></button>
      <button class="btn p-0 border-0 cell cbtn red hang"><svg width="31" height="31" viewBox="0 0 24 24"><path fill="#fff" d="M12 9c-1.600 0-3.150.25-4.600.72v3.100c0 .39-.23.74-.56.9-.98.49-1.870 1.120-2.660 1.850-.18.18-.43.28-.7.28-.28 0-.53-.11-.71-.29L.29 13.080c-.18-.17-.29-.42-.29-.7 0-.28.11-.53.29-.71C3.340 8.780 7.460 7 12 7s8.660 1.780 11.710 4.670c.18.18.29.43.29.71 0 .28-.11.53-.29.71l-2.480 2.480c-.18.18-.43.29-.71.29-.27 0-.52-.11-.7-.28-.79-.74-1.690-1.360-2.670-1.850-.33-.16-.56-.5-.56-.9v-3.100C15.150 9.250 13.600 9 12 9z"/></svg></button>
    </div>
    <div class="slots cright">
      <svg width="26" height="26"><circle cx="13" cy="13" r="11.500" fill="none" stroke="#fff" stroke-width="2.600"/><path d="M13 11.500V19M13 7v2.600" stroke="#fff" stroke-width="2.600"/></svg>
      <span class="position-relative"><svg width="33" height="33" viewBox="0 0 24 24"><path fill="#fff" stroke="#fff" stroke-width=".3" d="M9 13.750c-2.340 0-7 1.170-7 3.500V19h14v-1.750c0-2.330-4.660-3.500-7-3.500zM4.340 17c.84-.58 2.870-1.250 4.660-1.250s3.820.67 4.660 1.250H4.340zM9 12c1.930 0 3.500-1.570 3.500-3.500S10.930 5 9 5 5.500 6.570 5.500 8.500 7.070 12 9 12zm0-5c.83 0 1.500.67 1.500 1.500S9.830 10 9 10s-1.500-.67-1.500-1.500S8.170 7 9 7zm7.040 6.810c1.160.84 1.960 1.960 1.960 3.440V19h4v-1.750c0-2.020-3.500-3.170-5.960-3.440zM15 12c1.930 0 3.500-1.570 3.500-3.500S16.930 5 15 5c-.54 0-1.040.13-1.500.35.63.89 1 1.980 1 3.150s-.37 2.260-1 3.150c.46.22.96.35 1.500.35z"/></svg><span class="disc cnt rb position-absolute">52</span></span>
      <span class="position-relative"><svg width="27" height="27" viewBox="1.500 1.500 21 21"><path fill="#fff" d="M4 4h16v12H5.170L4 17.170V4m0-2c-1.100 0-1.990.9-1.990 2L2 22l4-4h14c1.100 0 2-.9 2-2V4c0-1.100-.9-2-2-2H4zm2 10h8v2H6v-2zm0-3h12v2H6V9zm0-3h12v2H6V6z"/></svg><i class="dot position-absolute"></i></span>
      <svg width="26" height="27" viewBox="0 0 26 27"><path fill-rule="evenodd" d="M12.500 0l7 12h-14zM12.500 5l-2.300 4.500h4.600z" fill="#fff"/><rect x="1.900" y="16.500" width="8" height="8.500" fill="none" stroke="#fff" stroke-width="2.700"/><circle cx="19.500" cy="20.700" r="4.800" fill="none" stroke="#fff" stroke-width="2.700"/></svg>
    </div>
  </footer>
</main>

<div class="wtask d-flex align-items-center">
  <div class="cell wstart"><svg width="20" height="20"><use href="#win"/></svg></div>
  <div class="slots wsearch"><svg width="21" height="21" color="#222"><use href="#mag"/></svg><span class="tx" data-w="163">Type here to search</span></div>
  <div class="wapps d-flex">
    <div class="cell"><svg width="20" height="20"><circle cx="10" cy="10" r="8" fill="none" stroke="#000" stroke-width="2.800"/></svg></div>
    <div class="cell"><svg width="20" height="20"><use href="#tview"/></svg></div>
    <div class="cell"><svg width="30" height="31"><use href="#edge"/></svg></div>
    <div class="cell on"><svg width="28" height="26"><use href="#folder"/></svg></div>
    <div class="cell"><svg width="29" height="31" viewBox="0 0 29 31"><path d="M8 11V3.500Q8 2 9.500 2h10Q21 2 21 3.500V11" fill="none" stroke="#1f1f1f" stroke-width="3"/><path d="M0 10h29v19.500q0 1.500-1.500 1.500h-26Q0 31 0 29.500z" fill="#2b2b2b"/><path fill="#f25022" d="M9 14.500h5.200v5.200H9z"/><path fill="#7fba00" d="M15.200 14.500h5.200v5.200h-5.200z"/><path fill="#00a4ef" d="M9 20.700h5.200v5.200H9z"/><path fill="#ffb900" d="M15.200 20.700h5.200v5.200h-5.200z"/></svg></div>
    <div class="cell"><svg width="28" height="28" viewBox="0 0 28 28"><path d="M27 3l1 18-5 6-3-2z" fill="#b0915a"/><path d="M25 3l-5 22 4 2 3-22z" fill="#eef6f8"/><path d="M9 2l16 1-6 23L0 19z" fill="url(#gN)"/><path d="M9 2l16 1-.6 2.500L8 4z" fill="#c9c9b8"/></svg></div>
    <div class="cell"><svg width="29" height="29" viewBox="0 0 29 29"><path d="M4 .500h24.500v28H.500V4z" fill="#dfe9f8" stroke="#5c7fbd"/><path d="M2 24l15-4 11 3v5H2z" fill="#fff"/><path d="M5 5l4.500 15L14 8l3.500 12L23 4" fill="none" stroke="#1c4fa8" stroke-width="4"/><path d="M3 5h5M20 4.500h5" stroke="#1c4fa8" stroke-width="2"/><path d="M20 17l8 2-2 8-8-3z" fill="#fff" stroke="#8ba8d8"/></svg></div>
    <div class="cell"><svg width="30" height="29"><use href="#mail"/></svg></div>
    <div class="cell act on"><svg width="30" height="30"><use href="#chrome"/></svg><span class="disc rb position-absolute fw-bold" style="width:20px;height:20px;left:27px;top:22px;background:#5563b8;font-size:12px;color:#d6dbf6">S</span></div>
    <div class="cell"><svg width="28" height="28" viewBox="0 0 28 28"><circle cx="14" cy="14" r="14" fill="#1ed760"/><path d="M5.500 9.500q9-2.500 17 2M6.500 14q8-2 14 2M7.500 18.300q6.500-1.500 11.500 1.700" fill="none" stroke="#111" stroke-width="2.400" stroke-linecap="round"/></svg></div>
    <div class="cell on"><svg width="30" height="30" viewBox="0 0 30 30"><path d="M2 9l3-2 18 15v7z" fill="#1b8ad3"/><path d="M2 21l3 2L23 8V1z" fill="#0d6fb3"/><path d="M22 0l8 3v24l-8 3z" fill="#27a1ef"/></svg></div>
  </div>
  <div class="slots wtray">
    <svg width="28" height="26" viewBox="0 0 28 26"><circle cx="14" cy="12" r="11.500" fill="url(#gS)"/><path d="M3 20q0-4 5-4 3-5 8-4 3 1 4 4 7 0 7 4z" fill="#e8d2b4"/><path d="M0 20.500q14-2.500 28-.5-10 3-28 .5z" fill="#b99a78"/></svg>
    <span data-w="37">26°C</span>
    <span data-w="39">Haze</span>
    <svg width="16" height="9" class="ms-1"><use href="#up"/></svg>
    <svg width="21" height="15"><use href="#bat"/></svg>
    <svg width="16" height="16"><use href="#wifi"/></svg>
    <svg width="20" height="17"><use href="#spk"/></svg>
    <span class="stack"><span data-w="54">9:35 AM</span><br><span data-w="58">8/2/2021</span></span>
    <svg width="32" height="32" viewBox="0 0 32 32"><use href="#note" width="20" height="20" y="2"/><path d="M4 7h12M4 10.500h12M4 14h8" stroke="#ddd" stroke-width="1.200"/><circle cx="20" cy="21" r="10" fill="#d4d4d6" fill-opacity=".9" stroke="#777" stroke-width="1.300"/><text x="16.500" y="27" font-size="16" fill="#000">1</text></svg>
  </div>
</div>

<div class="mark1 position-absolute"><span data-w="196">Activate Windows</span></div>
<div class="mark2 position-absolute"><span data-w="283">Go to Settings to activate Windows.</span></div>

<script src="https://cdn.jsdelivr.net/npm/bootstrap@5.3.0/dist/js/bootstrap.bundle.min.js"></script>
<script>
// Track each label so that it fills the width its slot expects.
document.querySelectorAll('[data-w]').forEach(function (el) {
  var r = document.createRange();
  r.selectNodeContents(el);
  var w = r.getBoundingClientRect().width;
  el.style.letterSpacing = ((+el.dataset.w - w) / el.textContent.length).toFixed(3) + 'px';
});
</script>
</body>
</html>
